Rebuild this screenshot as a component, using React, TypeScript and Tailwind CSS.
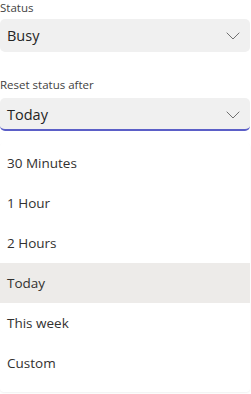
const options = ['30 Minutes', '1 Hour', '2 Hours', 'Today', 'This week', 'Custom'];

function Chevron() {
  return (
    <svg width="14" height="8" viewBox="0 0 14 8" fill="none" className="shrink-0">
      <path d="M0.7 0.7 L7 7 L13.3 0.7" stroke="#707070" strokeWidth="1" />
    </svg>
  );
}

export default function App() {
  const selected = 'Today';

  return (
    <div className="h-[394px] w-[251px] overflow-hidden bg-white font-['Open_Sans',sans-serif] text-[#242424]">
      <p className="pt-[1px] text-[11.5px] leading-[14px] text-[#424242]">Status</p>

      <button
        type="button"
        className="mt-[4px] flex h-[33px] w-[250px] items-center justify-between rounded-[5px] bg-[#f0f0f0] pl-[7px] pr-[10px] text-left text-[14.5px]"
      >
        <span>Busy</span>
        <Chevron />
      </button>

      <p className="mt-[26px] text-[11.5px] leading-[14px] text-[#424242]">Reset status after</p>

      <button
        type="button"
        className="mt-[6px] flex h-[33px] w-[250px] items-center justify-between rounded-[5px] border-b-2 border-[#5b5fc7] bg-[#f0f0f0] pl-[7px] pr-[10px] pt-[2px] text-left text-[14.5px]"
      >
        <span>Today</span>
        <Chevron />
      </button>

      <ul className="mt-[12px] w-[250px] rounded-[4px] bg-white pb-[9px] shadow-[0_1px_2px_rgba(0,0,0,0.06)]">
        {options.map((opt) => (
          <li
            key={opt}
            className={`flex h-[40px] items-center pl-[7px] text-[13.5px] text-[#323130] ${
              opt === selected ? 'bg-[#edebe9]' : ''
            }`}
          >
            {opt}
          </li>
        ))}
      </ul>
    </div>
  );
}
